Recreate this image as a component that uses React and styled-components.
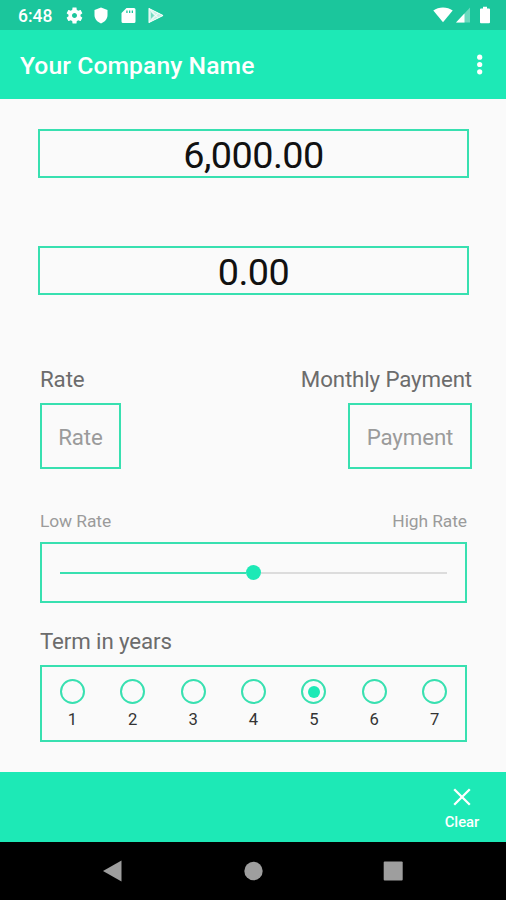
import React, { useState } from "react";
import styled, { createGlobalStyle } from "styled-components";

const GlobalStyle = createGlobalStyle`
  * {
    box-sizing: border-box;
  }
  body {
    margin: 0;
    background: #fafafa;
    font-family: Roboto, "Liberation Sans", sans-serif;
  }
`;

const accent = "#1de9b6";
const outline = "#38e0b0";

const Screen = styled.div`
  width: 506px;
  height: 900px;
  display: flex;
  flex-direction: column;
  background: #fafafa;
  overflow: hidden;
`;

const StatusBar = styled.div`
  height: 30px;
  flex: none;
  padding: 0 15px 0 18px;
  display: flex;
  justify-content: space-between;
  align-items: center;
  background: #1bc69c;
`;

const StatusIcons = styled.div`
  display: flex;
  align-items: center;
  color: #fff;

  svg {
    display: block;
  }
`;

const Clock = styled.span`
  width: 48px;
  padding-top: 2px;
  font-size: 17.5px;
  font-weight: 500;
  line-height: 20px;
`;

const Toolbar = styled.header`
  height: 69px;
  flex: none;
  padding: 0 21px 0 20px;
  display: flex;
  justify-content: space-between;
  align-items: center;
  background: ${accent};
`;

const Title = styled.h1`
  margin: 2px 0 0;
  color: #fff;
  font-size: 24.7px;
  font-weight: 500;
  line-height: 30px;
  letter-spacing: 0.07px;
`;

const MenuButton = styled.button`
  width: 10px;
  height: 24px;
  padding: 0;
  border: none;
  background: none;
`;

const Content = styled.main`
  flex: 1;
  padding: 30px 34px 0 38px;
`;

const Amount = styled.div`
  width: 431px;
  height: 49px;
  margin-bottom: 68px;
  padding-top: 2px;
  display: flex;
  justify-content: center;
  align-items: center;
  border: 2px solid ${outline};
  color: #111;
  font-size: 37.8px;
  line-height: 44px;
  letter-spacing: -0.55px;
`;

const Columns = styled.div`
  padding: 2px 0 0 2px;
  display: flex;
  justify-content: space-between;
`;

const Column = styled.div`
  display: flex;
  flex-direction: column;
  align-items: ${({ $end }) => ($end ? "flex-end" : "flex-start")};
`;

const Label = styled.div`
  color: #6c6c6c;
  font-size: 22.3px;
  line-height: 28px;
  letter-spacing: -0.12px;
`;

const Field = styled.div`
  width: ${({ $width }) => $width}px;
  height: 66px;
  margin-top: 10px;
  padding-top: 2px;
  display: flex;
  justify-content: center;
  align-items: center;
  border: 2px solid ${outline};
  color: #9b9b9b;
  font-size: 22.3px;
  letter-spacing: -0.12px;
`;

const Section = styled.section`
  width: 429px;
  padding-left: 2px;
`;

const RangeLabels = styled.div`
  margin-top: 42px;
  display: flex;
  justify-content: space-between;
  color: #9b9b9b;
  font-size: 17.4px;
  line-height: 20px;
  letter-spacing: -0.08px;
`;

const SliderBox = styled.div`
  height: 61px;
  margin-top: 11px;
  padding: 0 18px;
  display: flex;
  align-items: center;
  border: 2px solid ${outline};
`;

const Track = styled.div`
  flex: 1;
  height: 2px;
  background: ${({ $filled }) => ($filled ? outline : "#dcdcdc")};
`;

const Thumb = styled.div`
  width: 15px;
  height: 15px;
  border-radius: 50%;
  background: ${accent};
`;

const TermLabel = styled(Label)`
  margin-top: 24px;
`;

const TermBox = styled.div`
  height: 77px;
  margin-top: 10px;
  padding: 12px 0 0;
  display: flex;
  justify-content: center;
  border: 2px solid ${outline};
`;

const Term = styled.div`
  width: 60.4px;
  flex: none;
  display: flex;
  flex-direction: column;
  align-items: center;
  color: #333;
  font-size: 16.6px;
  line-height: 20px;
  cursor: pointer;
`;

const Radio = styled.span`
  width: 25px;
  height: 25px;
  margin-bottom: 6px;
  display: flex;
  justify-content: center;
  align-items: center;
  border: 2px solid ${outline};
  border-radius: 50%;

  &::after {
    content: "";
    width: 12px;
    height: 12px;
    border-radius: 50%;
    background: ${({ $checked }) => ($checked ? accent : "transparent")};
  }
`;

const BottomBar = styled.footer`
  height: 70px;
  flex: none;
  padding-right: 26px;
  display: flex;
  justify-content: flex-end;
  background: ${accent};
`;

const ClearButton = styled.button`
  width: 36px;
  padding: 16px 0 0;
  display: flex;
  flex-direction: column;
  align-items: center;
  border: none;
  background: none;
  color: #fff;
  font-family: inherit;
  font-size: 14.8px;
  font-weight: 500;
  line-height: 18px;
`;

const ClearIcon = styled.svg`
  flex: none;
  margin-bottom: 7px;
`;

const NavBar = styled.nav`
  height: 58px;
  flex: none;
  padding: 0 103px 0 102px;
  display: flex;
  justify-content: space-between;
  align-items: center;
  background: #000;
`;

const Gap = styled.span`
  width: ${({ $size }) => $size}px;
`;

const terms = [1, 2, 3, 4, 5, 6, 7];

const App = () => {
  const [term, setTerm] = useState(5);

  return (
    <>
      <GlobalStyle />
      <Screen>
        <StatusBar>
          <StatusIcons>
            <Clock>6:48</Clock>
            <svg width="17" height="17" viewBox="1.4 1.4 21.2 21.2" fill="currentColor">
              <path d="M19.43 12.98c.04-.32.07-.64.07-.98s-.03-.66-.07-.98l2.11-1.65c.19-.15.24-.42.12-.64l-2-3.46c-.12-.22-.39-.3-.61-.22l-2.49 1c-.52-.4-1.08-.73-1.69-.98l-.38-2.65C14.46 2.18 14.25 2 14 2h-4c-.25 0-.46.18-.49.42l-.38 2.65c-.61.25-1.17.59-1.69.98l-2.49-1c-.23-.09-.49 0-.61.22l-2 3.46c-.13.22-.07.49.12.64l2.11 1.65c-.04.32-.07.65-.07.98s.03.66.07.98l-2.11 1.65c-.19.15-.24.42-.12.64l2 3.46c.12.22.39.3.61.22l2.49-1c.52.4 1.08.73 1.69.98l.38 2.65c.03.24.24.42.49.42h4c.25 0 .46-.18.49-.42l.38-2.65c.61-.25 1.17-.59 1.69-.98l2.49 1c.23.09.49 0 .61-.22l2-3.46c.12-.22.07-.49-.12-.64l-2.11-1.65zM12 15.1c-1.7 0-3.1-1.4-3.1-3.1s1.4-3.1 3.1-3.1 3.1 1.4 3.1 3.1-1.4 3.1-3.1 3.1z" />
            </svg>
            <Gap $size={11} />
            <svg width="14" height="17" viewBox="0 0 14 17" fill="currentColor">
              <path d="M7 .5L.5 3v5c0 4 2.8 7 6.5 8.500C10.700 15 13.500 12 13.500 8V3z" />
            </svg>
            <Gap $size={13} />
            <svg width="15" height="17" viewBox="0 0 15 17" fill="currentColor">
              <path
                fillRule="evenodd"
                d="M5.500 1H13q1.500 0 1.500 1.500v12q0 1.500-1.500 1.500H2Q.5 16 .5 14.500V6zM5.300 3.500v2.500h1.300v-2.500zM8 3.500v2.500h1.300v-2.500zM10.700 3.500v2.500h1.300v-2.500z"
              />
            </svg>
            <Gap $size={12} />
            <svg width="17" height="17" viewBox="0 0 17 17">
              <path d="M1 1.500v14L15.500 8.500z" fill="#fff" fillOpacity="0.75" />
              <path
                d="M1 1.500l9 9.200M1 15.500l9-9.200M1 1.500v14M1 1.500l14 7L1 15.500"
                fill="none"
                stroke="#fff"
                strokeWidth="1"
              />
              <path d="M3 5.500v6L6 8.500z" fill="#1bc69c" fillOpacity="0.5" />
            </svg>
          </StatusIcons>
          <StatusIcons>
            <svg width="20" height="16" viewBox="0 0 20 16" fill="currentColor">
              <path d="M10 15.300L.3 3.600Q4.500.5 10 .5t9.700 3.100z" />
            </svg>
            <Gap $size={2} />
            <svg width="16" height="16" viewBox="0 0 16 16" fill="currentColor">
              <path d="M15 .5v15H1z" fillOpacity="0.35" />
              <path d="M9.500 6.400v9.100H1z" />
            </svg>
            <Gap $size={8} />
            <svg width="12" height="18" viewBox="0 0 12 18" fill="currentColor">
              <path d="M4 .7h4v1.800h2q1 0 1 1v12.800q0 1-1 1H2q-1 0-1-1V3.500q0-1 1-1h2z" />
            </svg>
          </StatusIcons>
        </StatusBar>

        <Toolbar>
          <Title>Your Company Name</Title>
          <MenuButton aria-label="More options">
            <svg width="10" height="24" viewBox="0 0 10 24" fill="#fff">
              <circle cx="4.700" cy="4.200" r="2.600" />
              <circle cx="4.700" cy="11.500" r="2.600" />
              <circle cx="4.700" cy="18.800" r="2.600" />
            </svg>
          </MenuButton>
        </Toolbar>

        <Content>
          <Amount>6,000.00</Amount>
          <Amount>0.00</Amount>

          <Columns>
            <Column>
              <Label>Rate</Label>
              <Field $width={81}>Rate</Field>
            </Column>
            <Column $end>
              <Label>Monthly Payment</Label>
              <Field $width={124}>Payment</Field>
            </Column>
          </Columns>

          <Section>
            <RangeLabels>
              <span>Low Rate</span>
              <span>High Rate</span>
            </RangeLabels>
            <SliderBox>
              <Track $filled />
              <Thumb />
              <Track />
            </SliderBox>

            <TermLabel>Term in years</TermLabel>
            <TermBox>
              {terms.map((years) => (
                <Term key={years} onClick={() => setTerm(years)}>
                  <Radio $checked={years === term} />
                  {years}
                </Term>
              ))}
            </TermBox>
          </Section>
        </Content>

        <BottomBar>
          <ClearButton>
            <ClearIcon width="18" height="18" viewBox="0 0 18 18">
              <path d="M1.200 1.200l15.600 15.600M16.800 1.200l-15.600 15.600" stroke="#fff" strokeWidth="2.300" />
            </ClearIcon>
            Clear
          </ClearButton>
        </BottomBar>

        <NavBar>
          <svg width="20" height="22" viewBox="0 0 20 22" fill="#9e9e9e">
            <path d="M1 11L19.500.5v21z" />
          </svg>
          <svg width="20" height="20" viewBox="0 0 20 20" fill="#9e9e9e">
            <circle cx="10.500" cy="10" r="9.200" />
          </svg>
          <svg width="20" height="20" viewBox="0 0 20 20" fill="#9e9e9e">
            <rect x="0.700" y="0.500" width="19" height="19" rx="1" />
          </svg>
        </NavBar>
      </Screen>
    </>
  );
};

export default App;
